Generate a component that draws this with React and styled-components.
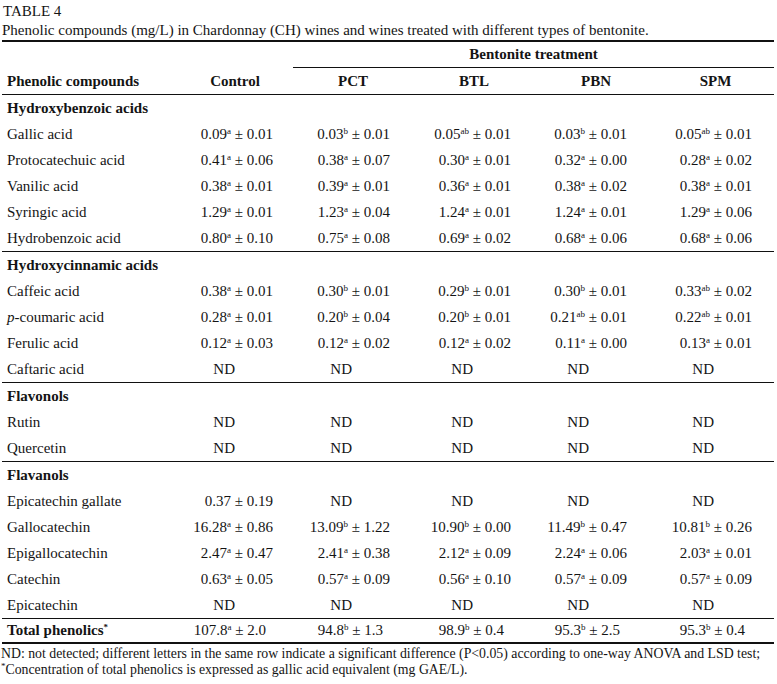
import React from "react";
import styled, { createGlobalStyle } from "styled-components";

const GlobalStyle = createGlobalStyle`
  html, body { margin: 0; padding: 0; background: #ffffff; }
  body { font-family: "Liberation Serif", "Times New Roman", serif; color: #141414; }
`;

const COLS = [
  { key: "Control", width: 116, pad: 20 },
  { key: "PCT", width: 120, pad: 23 },
  { key: "BTL", width: 122, pad: 24 },
  { key: "PBN", width: 122, pad: 30 },
  { key: "SPM", width: 117, pad: 22 },
];
const LABEL_W = 175;
const TEMPLATE = `${LABEL_W}px ${COLS.map((c) => c.width + "px").join(" ")}`;

const SECTIONS = [
  {
    title: "Hydroxybenzoic acids",
    rows: [
      ["Gallic acid", ["0.09 a 0.01", "0.03 b 0.01", "0.05 ab 0.01", "0.03 b 0.01", "0.05 ab 0.01"]],
      ["Protocatechuic acid", ["0.41 a 0.06", "0.38 a 0.07", "0.30 a 0.01", "0.32 a 0.00", "0.28 a 0.02"]],
      ["Vanilic acid", ["0.38 a 0.01", "0.39 a 0.01", "0.36 a 0.01", "0.38 a 0.02", "0.38 a 0.01"]],
      ["Syringic acid", ["1.29 a 0.01", "1.23 a 0.04", "1.24 a 0.01", "1.24 a 0.01", "1.29 a 0.06"]],
      ["Hydrobenzoic acid", ["0.80 a 0.10", "0.75 a 0.08", "0.69 a 0.02", "0.68 a 0.06", "0.68 a 0.06"]],
    ],
  },
  {
    title: "Hydroxycinnamic acids",
    rows: [
      ["Caffeic acid", ["0.38 a 0.01", "0.30 b 0.01", "0.29 b 0.01", "0.30 b 0.01", "0.33 ab 0.02"]],
      ["p-coumaric acid", ["0.28 a 0.01", "0.20 b 0.04", "0.20 b 0.01", "0.21 ab 0.01", "0.22 ab 0.01"]],
      ["Ferulic acid", ["0.12 a 0.03", "0.12 a 0.02", "0.12 a 0.02", "0.11 a 0.00", "0.13 a 0.01"]],
      ["Caftaric acid", ["ND", "ND", "ND", "ND", "ND"]],
    ],
  },
  {
    title: "Flavonols",
    rows: [
      ["Rutin", ["ND", "ND", "ND", "ND", "ND"]],
      ["Quercetin", ["ND", "ND", "ND", "ND", "ND"]],
    ],
  },
  {
    title: "Flavanols",
    rows: [
      ["Epicatechin gallate", ["0.37 - 0.19", "ND", "ND", "ND", "ND"]],
      ["Gallocatechin", ["16.28 a 0.86", "13.09 b 1.22", "10.90 b 0.00", "11.49 b 0.47", "10.81 b 0.26"]],
      ["Epigallocatechin", ["2.47 a 0.47", "2.41 a 0.38", "2.12 a 0.09", "2.24 a 0.06", "2.03 a 0.01"]],
      ["Catechin", ["0.63 a 0.05", "0.57 a 0.09", "0.56 a 0.10", "0.57 a 0.09", "0.57 a 0.09"]],
      ["Epicatechin", ["ND", "ND", "ND", "ND", "ND"]],
    ],
  },
];

const TOTALS = ["107.8 a 2.0", "94.8 b 1.3", "98.9 b 0.4", "95.3 b 2.5", "95.3 b 0.4"];

const Page = styled.div`
  width: 772px;
  padding: 2px 0 0 2px;
`;

const Title = styled.div`
  font-size: 15px;
  line-height: 19px;
  padding-left: 1px;
`;

const Caption = styled.div`
  font-size: 15px;
  line-height: 19px;
`;

const Table = styled.div`
  border-top: 2px solid #111;
  border-bottom: 2px solid #111;
  font-size: 15px;
`;

const Row = styled.div`
  display: grid;
  grid-template-columns: ${TEMPLATE};
  height: ${(p) => p.$h || 26}px;
  align-items: center;
  border-bottom: ${(p) => (p.$line ? "1px solid #111" : "none")};
`;

const TopHead = styled.div`
  display: grid;
  grid-template-columns: ${LABEL_W + COLS[0].width}px 1fr;
  height: 26px;
`;

const SpanHead = styled.div`
  border-bottom: 1px solid #111;
  font-weight: bold;
  text-align: center;
  line-height: 25px;
`;

const HeadCell = styled.div`
  font-weight: bold;
  text-align: ${(p) => (p.$left ? "left" : "center")};
  padding-left: ${(p) => (p.$left ? 5 : 0)}px;
`;

const Section = styled.div`
  border-bottom: 1px solid #111;
`;

const GroupLabel = styled.div`
  font-weight: bold;
  padding-left: 5px;
`;

const Label = styled.div`
  padding-left: 5px;
  font-weight: ${(p) => (p.$bold ? "bold" : "normal")};
  white-space: nowrap;
`;

const Value = styled.div`
  text-align: right;
  white-space: nowrap;
  padding-right: ${(p) => p.$pad + (p.$nd ? 38 : 0) + (p.$short ? 7 : 0)}px;
`;

const Sup = styled.sup`
  font-size: 9px;
  line-height: 0;
  vertical-align: 5px;
`;

const Footnotes = styled.div`
  padding-top: 2px;
  font-size: 13.8px;
  line-height: 16px;
  margin-left: -1px;
  white-space: nowrap;
`;

function Cell({ text, col, short }) {
  if (text === "ND") {
    return (
      <Value $pad={col.pad} $nd>
        ND
      </Value>
    );
  }
  const [v, l, sd] = text.split(" ");
  return (
    <Value $pad={col.pad} $short={short}>
      {v}
      {l !== "-" && <Sup>{l}</Sup>} ± {sd}
    </Value>
  );
}

function RowLabel({ name }) {
  if (name.startsWith("p-")) {
    return (
      <Label>
        <i>p</i>
        {name.slice(1)}
      </Label>
    );
  }
  return <Label>{name}</Label>;
}

export default function App() {
  return (
    <>
      <GlobalStyle />
      <Page>
        <Title>TABLE 4</Title>
        <Caption>
          Phenolic compounds (mg/L) in Chardonnay (CH) wines and wines treated with different types of bentonite.
        </Caption>
        <Table>
          <TopHead>
            <div />
            <SpanHead>Bentonite treatment</SpanHead>
          </TopHead>
          <Row $line $h={26}>
            <HeadCell $left>Phenolic compounds</HeadCell>
            {COLS.map((c) => (
              <HeadCell key={c.key}>{c.key}</HeadCell>
            ))}
          </Row>
          {SECTIONS.map((s) => (
            <Section key={s.title}>
              <Row>
                <GroupLabel>{s.title}</GroupLabel>
              </Row>
              {s.rows.map(([name, vals]) => (
                <Row key={name}>
                  <RowLabel name={name} />
                  {vals.map((v, i) => (
                    <Cell key={i} text={v} col={COLS[i]} />
                  ))}
                </Row>
              ))}
            </Section>
          ))}
          <Row $h={23}>
            <Label $bold>
              Total phenolics<Sup>*</Sup>
            </Label>
            {TOTALS.map((v, i) => (
              <Cell key={i} text={v} col={COLS[i]} short />
            ))}
          </Row>
        </Table>
        <Footnotes>
          <div>
            ND: not detected; different letters in the same row indicate a significant difference (P&lt;0.05) according to one-way ANOVA and LSD test;
          </div>
          <div>
            <Sup>*</Sup>Concentration of total phenolics is expressed as gallic acid equivalent (mg GAE/L).
          </div>
        </Footnotes>
      </Page>
    </>
  );
}
